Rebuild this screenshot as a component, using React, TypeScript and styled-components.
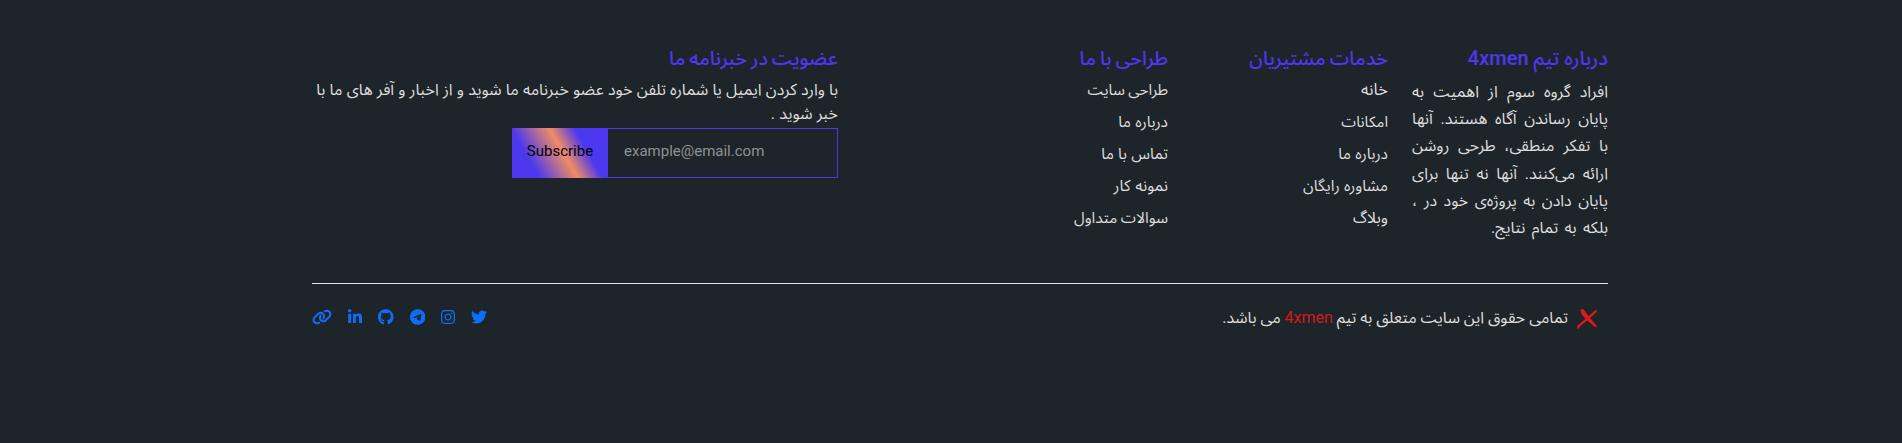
import React from "react";
import styled, { createGlobalStyle } from "styled-components";
import { FaTwitter, FaInstagram, FaTelegram, FaGithub, FaLinkedinIn, FaLink } from "react-icons/fa6";

const GlobalStyle = createGlobalStyle`
  *, *::before, *::after { box-sizing: border-box; }
  body {
    margin: 0;
    background: #1e252a;
    color: #dddddd;
    font: 400 16px/24px Roboto, "Noto Sans Arabic", "DejaVu Sans", sans-serif;
  }
`;

const Footer = styled.footer`
  direction: rtl;
  width: 1320px;
  height: 443px;
  margin-left: 300px;
  padding: 46px 12px 0;
`;
const Columns = styled.div`
  display: grid;
  grid-template-columns: 196px 196px 306px 526px;
  column-gap: 24px;
  height: 237px;
`;
const Title = styled.h5<{ $compact?: boolean; $spacing?: number }>`
  margin: 0 0 ${(p) => (p.$compact ? 6 : 8)}px;
  font-size: ${(p) => (p.$compact ? 19.5 : 20)}px;
  line-height: ${(p) => (p.$compact ? 26 : 24)}px;
  font-weight: 500;
  word-spacing: ${(p) => p.$spacing ?? 0}px;
  color: #4b38ef;
`;
const About = styled.p`
  margin: 0;
  line-height: 27.2px;
  text-align: justify;
  word-spacing: 2.4px;
`;
const Links = styled.ul`
  list-style: none;
  margin: 0;
  padding: 0;
  display: grid;
  row-gap: 8px;
`;
const LinkItem = styled.li<{ $size?: number; $spacing?: number }>`
  height: 24px;
  font-size: ${(p) => p.$size ?? 15.5}px;
  word-spacing: ${(p) => p.$spacing ?? 0}px;
`;
const Note = styled.div`
  word-spacing: 0.2px;
`;
const Form = styled.form`
  display: flex;
  width: 326px;
  height: 50px;
  margin-top: 2px;
`;
const Email = styled.input`
  direction: ltr;
  width: 230px;
  border: 1px solid #4b38ef;
  border-left: 0;
  border-radius: 0;
  padding: 0 16px 4px;
  background: transparent;
  color: inherit;
  font: inherit;
  font-size: 15px;
  outline: none;
  &::placeholder { color: #8e9295; opacity: 1; }
`;
const Subscribe = styled.button`
  width: 96px;
  border: 0;
  padding: 0 0 5px;
  font: inherit;
  font-size: 15px;
  color: #000;
  background: linear-gradient(60deg, #4b38ef 22%, #f08c64 53%, #4b38ef 73%);
`;
const Bottom = styled.div`
  display: flex;
  justify-content: space-between;
  border-top: 1px solid #dee2e6;
  padding-top: 22px;
`;
const Copyright = styled.div`
  display: flex;
  padding-right: 10px;
  gap: 9px;
  word-spacing: -0.1px;
`;
const Mark = styled.svg`
  width: 21px;
  height: 20px;
  margin-top: 3px;
  fill: #dc181a;
`;
const Brand = styled.span`
  color: #d2181c;
`;
const Socials = styled.div`
  display: flex;
  direction: ltr;
  gap: 16px;
  padding-top: 3px;
`;
const SocialLink = styled.a<{ $width: number }>`
  display: block;
  width: ${(p) => p.$width}px;
  height: 16px;
  color: #0d6efd;
  && svg {
    display: block;
    width: 100%;
    height: 100%;
  }
`;

type Item = { text: string; size?: number; spacing?: number };

const services: Item[] = [
  { text: "خانه", size: 16.5 },
  { text: "امکانات", size: 15 },
  { text: "درباره ما", spacing: 0.5 },
  { text: "مشاوره رایگان", spacing: 0.4 },
  { text: "وبلاگ", size: 16 },
];
const design: Item[] = [
  { text: "طراحی سایت", size: 15.2, spacing: -0.3 },
  { text: "درباره ما", spacing: 0.5 },
  { text: "تماس با ما", spacing: 0.5 },
  { text: "نمونه کار", size: 15.8, spacing: 0.8 },
  { text: "سوالات متداول", size: 15.4, spacing: -0.3 },
];
const socials = [
  { icon: FaLink, width: 20 },
  { icon: FaLinkedinIn, width: 14 },
  { icon: FaGithub, width: 15.5 },
  { icon: FaTelegram, width: 15.5 },
  { icon: FaInstagram, width: 14 },
  { icon: FaTwitter, width: 16 },
];

const LinkColumn = ({ title, items }: { title: string; items: Item[] }) => (
  <section>
    <Title $compact $spacing={-0.7}>{title}</Title>
    <Links>
      {items.map(({ text, size, spacing }) => (
        <LinkItem key={text} $size={size} $spacing={spacing}>{text}</LinkItem>
      ))}
    </Links>
  </section>
);

const Logo = () => (
  <Mark viewBox="0 0 21 20">
    <path d="M4 .3 6 0 8 2 11.3 7.2 18 1.6 20.2.8 19.6 3 13 9.1 16 12.6 20.6 17.4 20 17.6 17.8 16 19.6 18.6 18 18.2 10.4 11.4 5 15.6 1.2 19.8 0 19.4.4 16.8 8.6 9.8 5.2 6.2 3.6 2Z" />
  </Mark>
);

export default function App() {
  return (
    <>
      <GlobalStyle />
      <Footer>
        <Columns>
          <section>
            <Title>درباره تیم 4xmen</Title>
            <About>
              افراد گروه سوم از اهمیت به پایان رساندن آگاه هستند. آنها با تفکر منطقی، طرحی روشن ارائه می‌کنند. آنها نه تنها برای پایان دادن به پروژه‌ی خود در ، بلکه به تمام نتایج.
            </About>
          </section>
          <LinkColumn title="خدمات مشتیریان" items={services} />
          <LinkColumn title="طراحی با ما" items={design} />
          <section>
            <Title $compact $spacing={-1}>عضویت در خبرنامه ما</Title>
            <Note>با وارد کردن ایمیل یا شماره تلفن خود عضو خبرنامه ما شوید و از اخبار و آفر های ما با خبر شوید .</Note>
            <Form>
              <Email type="email" placeholder="example@email.com" />
              <Subscribe type="button">Subscribe</Subscribe>
            </Form>
          </section>
        </Columns>
        <Bottom>
          <Copyright>
            <Logo />
            <span>تمامی حقوق این سایت متعلق به تیم <Brand>4xmen</Brand> می باشد.</span>
          </Copyright>
          <Socials>
            {socials.map(({ icon: Icon, width }, i) => (
              <SocialLink key={i} $width={width}><Icon /></SocialLink>
            ))}
          </Socials>
        </Bottom>
      </Footer>
    </>
  );
}
